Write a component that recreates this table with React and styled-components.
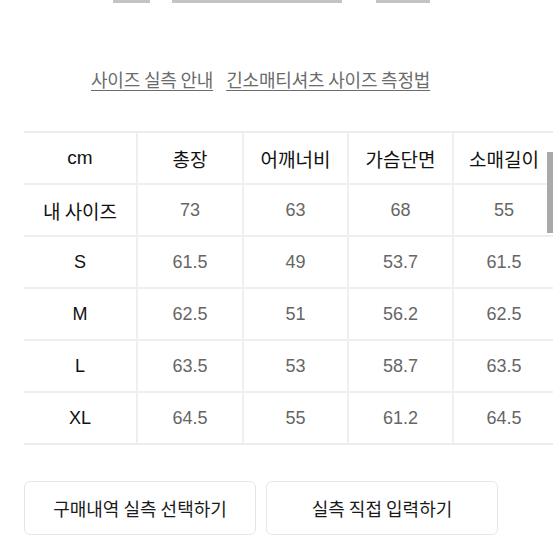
import React from "react";
import styled, { createGlobalStyle } from "styled-components";

const GlobalStyle = createGlobalStyle`
  html, body {
    margin: 0;
    padding: 0;
    background: #fff;
    overflow: hidden;
  }
  body {
    font-family: "Liberation Sans", "Noto Sans CJK KR", sans-serif;
  }
`;

const Page = styled.div`
  position: relative;
  width: 553px;
  height: 553px;
  overflow: hidden;
`;

const TopStrip = styled.div`
  display: flex;
  height: 3px;
  padding-left: 113px;
`;

const StripBar = styled.span`
  display: block;
  height: 3px;
  width: ${(p) => p.w}px;
  margin-right: ${(p) => p.gap}px;
  background: #c4c4c4;
`;

const LinkRow = styled.div`
  display: flex;
  gap: 13px;
  padding-left: 91px;
  margin-top: 63px;
`;

const GuideLink = styled.a`
  font-family: "Noto Sans CJK KR", sans-serif;
  font-size: 18px;
  line-height: 26px;
  color: #6b6b6b;
  text-decoration: underline;
  text-underline-offset: 3px;
  text-decoration-thickness: 1px;
  text-decoration-color: #6b6b6b;
  letter-spacing: -0.2px;
`;

const Table = styled.div`
  display: grid;
  grid-template-columns: 112px 106px 105px 105px 102px;
  width: 530px;
  margin: 39px 0 0 24px;
  border-top: 2px solid #ececec;
  border-bottom: 2px solid #ececec;
`;

const Cell = styled.div`
  height: ${(p) => (p.topRow ? 50 : 52)}px;
  display: flex;
  align-items: center;
  justify-content: center;
  font-family: ${(p) =>
    p.kr ? '"Noto Sans CJK KR", sans-serif' : '"Liberation Sans", sans-serif'};
  font-size: ${(p) => (p.kr ? 19 : p.topRow ? 19 : 18)}px;
  color: ${(p) => (p.head ? "#111" : "#666")};
  border-left: ${(p) => (p.first ? "none" : "2px solid #efefef")};
  border-top: ${(p) => (p.topRow ? "none" : "2px solid #efefef")};
  box-sizing: border-box;
`;

const ButtonRow = styled.div`
  display: flex;
  gap: 10px;
  padding-left: 24px;
  margin-top: 36px;
`;

const Button = styled.button`
  width: 232px;
  height: 54px;
  border: 1px solid #e6e6e6;
  border-radius: 6px;
  background: #fff;
  font-family: "Noto Sans CJK KR", sans-serif;
  font-size: 18px;
  color: #1a1a1a;
  display: flex;
  align-items: center;
  justify-content: center;
`;

const ScrollThumb = styled.div`
  position: absolute;
  right: 0;
  top: 152px;
  width: 6px;
  height: 81px;
  background: #a9a9a9;
`;

const headers = ["cm", "총장", "어깨너비", "가슴단면", "소매길이"];
const rows = [
  ["내 사이즈", "73", "63", "68", "55"],
  ["S", "61.5", "49", "53.7", "61.5"],
  ["M", "62.5", "51", "56.2", "62.5"],
  ["L", "63.5", "53", "58.7", "63.5"],
  ["XL", "64.5", "55", "61.2", "64.5"],
];

const isKorean = (s) => /[가-힣]/.test(s);

export default function App() {
  return (
    <Page>
      <GlobalStyle />
      <TopStrip>
        <StripBar w={37} gap={22} />
        <StripBar w={170} gap={34} />
        <StripBar w={54} gap={0} />
      </TopStrip>
      <LinkRow>
        <GuideLink>사이즈 실측 안내</GuideLink>
        <GuideLink>긴소매티셔츠 사이즈 측정법</GuideLink>
      </LinkRow>
      <Table>
        {headers.map((h, i) => (
          <Cell key={h} head first={i === 0} topRow kr={isKorean(h)}>
            {h}
          </Cell>
        ))}
        {rows.map((r) =>
          r.map((v, i) => (
            <Cell key={r[0] + i} head={i === 0} first={i === 0} kr={isKorean(v)}>
              {v}
            </Cell>
          ))
        )}
      </Table>
      <ButtonRow>
        <Button>구매내역 실측 선택하기</Button>
        <Button>실측 직접 입력하기</Button>
      </ButtonRow>
      <ScrollThumb />
    </Page>
  );
}
